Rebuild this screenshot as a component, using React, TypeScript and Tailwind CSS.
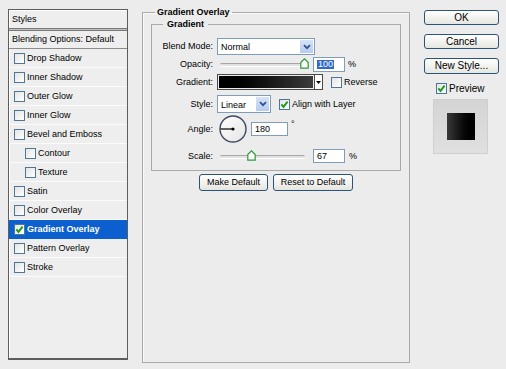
import React from "react";

const STYLES: { label: string; indent?: boolean; checked?: boolean; active?: boolean }[] = [
  { label: "Drop Shadow" },
  { label: "Inner Shadow" },
  { label: "Outer Glow" },
  { label: "Inner Glow" },
  { label: "Bevel and Emboss" },
  { label: "Contour", indent: true },
  { label: "Texture", indent: true },
  { label: "Satin" },
  { label: "Color Overlay" },
  { label: "Gradient Overlay", checked: true, active: true },
  { label: "Pattern Overlay" },
  { label: "Stroke" },
];

function Check({ checked }: { checked?: boolean }) {
  return (
    <span className="flex h-[11px] w-[11px] shrink-0 items-center justify-center border border-[#4c7797] bg-gradient-to-br from-[#e4e4e4] to-white">
      {checked && (
        <svg width="9" height="9" viewBox="0 0 9 9">
          <path d="M1.4 4.4 L3.5 6.9 L7.6 1.6" fill="none" stroke="#1c9a1c" strokeWidth="1.9" />
        </svg>
      )}
    </span>
  );
}

function Chevron() {
  return (
    <span className="flex h-full w-[15px] shrink-0 items-center justify-center border border-white bg-gradient-to-b from-[#d6e3f8] to-[#b6cbee]">
      <svg width="8" height="6" viewBox="0 0 8 6">
        <path d="M1 1.2 L4 4.2 L7 1.2" fill="none" stroke="#33508a" strokeWidth="1.7" />
      </svg>
    </span>
  );
}

function Select({ value, width }: { value: string; width: string }) {
  return (
    <div className={`flex h-full items-center border border-[#7f9db9] bg-white ${width}`}>
      <span className="flex-1 pl-[3px] pt-[2px]">{value}</span>
      <Chevron />
    </div>
  );
}

function Slider({ thumb }: { thumb: number }) {
  return (
    <div className="relative flex h-full w-[92px] items-center">
      <div className="mx-[3px] h-[3px] w-[85px] rounded-full border-t border-[#a7a7a7] bg-[#e2e2e2] shadow-[0_1px_0_#ffffff]" />
      <svg
        className="absolute top-[1px]"
        style={{ left: thumb }}
        width="9"
        height="11"
        viewBox="0 0 9 11"
      >
        <path d="M0.8 4.5 L4.5 0.8 L8.2 4.5 V10.2 H0.8 Z" fill="#fafafa" stroke="#2d9a3c" strokeWidth="1.2" />
      </svg>
    </div>
  );
}

function NumBox({ children, width }: { children: React.ReactNode; width: string }) {
  return (
    <div className={`flex h-full items-center border border-[#7f9db9] bg-white pl-[3px] ${width}`}>
      {children}
    </div>
  );
}

function Btn({ children, className = "" }: { children: React.ReactNode; className?: string }) {
  return (
    <div
      className={`flex items-center justify-center rounded-[3px] border border-[#2c5479] bg-gradient-to-b from-white to-[#e6e6e0] text-black ${className}`}
    >
      {children}
    </div>
  );
}

function Label({ children }: { children: React.ReactNode }) {
  return <span className="w-[61px] shrink-0 text-right">{children}</span>;
}

export default function App() {
  return (
    <div className="flex h-[369px] w-[506px] items-start bg-[#ececec] pl-[8px] font-['Liberation_Sans',Arial,sans-serif] text-[9px] leading-none text-black">
      {/* Styles list */}
      <div className="mt-[9px] flex h-[351px] w-[120px] flex-col border border-b-2 border-[#5d5d5d] bg-[#eeeeee] shadow-[inset_1px_1px_0_#ffffff]">
        <div className="flex h-[18px] shrink-0 items-center pl-[3px]">Styles</div>
        <div className="h-[3px] shrink-0 border-y border-[#7a7a7a] bg-[#bdbdbd]" />
        <div className="flex h-[18px] shrink-0 items-center border-b border-[#8c8c8c] pl-[3px]">
          Blending Options: Default
        </div>
        {STYLES.map((s) => (
          <div
            key={s.label}
            className={`flex h-[19px] shrink-0 items-center gap-[2px] border-b ${
              s.indent ? "pl-[16px]" : "pl-[5px]"
            } ${s.active ? "border-[#0b5fcf] bg-[#0b5fcf] font-bold text-white" : "border-[#fbfbfb]"}`}
          >
            <Check checked={s.checked} />
            <span>{s.label}</span>
          </div>
        ))}
      </div>

      {/* Settings */}
      <fieldset className="ml-[14px] mt-[6px] h-[357px] w-[268px] border border-[#a9a9a9] px-[8px] shadow-[inset_1px_1px_0_#fafafa]">
        <legend className="ml-[4px] px-[2px] font-bold leading-[12px]">Gradient Overlay</legend>
        <fieldset className="h-[153px] border border-[#a9a9a9]">
          <legend className="ml-[11px] px-[4px] font-bold leading-[12px]">Gradient</legend>
          <div className="flex flex-col">
            <div className="mt-[8px] flex h-[17px] items-center gap-[4px]">
              <Label>Blend Mode:</Label>
              <Select value="Normal" width="w-[98px]" />
            </div>
            <div className="mt-[2px] flex h-[15px] items-center gap-[4px]">
              <Label>Opacity:</Label>
              <Slider thumb={83} />
              <NumBox width="w-[32px]">
                <span className="bg-[#316ac5] px-[1px] text-white">100</span>
              </NumBox>
              <span className="-ml-[1px]">%</span>
            </div>
            <div className="mt-[2px] flex h-[16px] items-center">
              <Label>Gradient:</Label>
              <div className="ml-[4px] flex h-full w-[98px] border border-[#4a4a4a] p-[1px]">
                <div className="flex-1 bg-gradient-to-r from-black via-[#141414] to-[#3c3c3c]" />
              </div>
              <div className="flex h-full w-[8px] items-center justify-center border border-l-0 border-[#4a4a4a] bg-white">
                <svg width="5" height="3" viewBox="0 0 5 3">
                  <path d="M0 0 H5 L2.5 3 Z" fill="#000" />
                </svg>
              </div>
              <span className="ml-[8px]">
                <Check />
              </span>
              <span className="ml-[2px]">Reverse</span>
            </div>
            <div className="mt-[5px] flex h-[18px] items-center">
              <Label>Style:</Label>
              <span className="ml-[4px] h-full">
                <Select value="Linear" width="w-[54px]" />
              </span>
              <span className="ml-[8px]">
                <Check checked />
              </span>
              <span className="ml-[2px]">Align with Layer</span>
            </div>
            <div className="mt-[2px] flex h-[28px] items-center">
              <Label>Angle:</Label>
              <svg className="ml-[6px]" width="28" height="28" viewBox="0 0 28 28">
                <defs>
                  <linearGradient id="dial" x1="0" y1="0" x2="1" y2="1">
                    <stop offset="0" stopColor="#ffffff" />
                    <stop offset="1" stopColor="#e4e4e4" />
                  </linearGradient>
                </defs>
                <circle cx="14" cy="14" r="13" fill="url(#dial)" stroke="#3f4b66" strokeWidth="1.4" />
                <line x1="14" y1="14" x2="1.5" y2="14" stroke="#000" strokeWidth="1.2" />
                <circle cx="14" cy="14" r="1.6" fill="#000" />
              </svg>
              <span className="ml-[4px] h-[14px]">
                <NumBox width="w-[37px]">180</NumBox>
              </span>
              <span className="ml-[3px] -mt-[9px]">°</span>
            </div>
            <div className="mt-[6px] flex h-[14px] items-center gap-[4px]">
              <Label>Scale:</Label>
              <Slider thumb={30} />
              <NumBox width="w-[32px]">67</NumBox>
              <span>%</span>
            </div>
          </div>
        </fieldset>
        <div className="mt-[3px] flex justify-center gap-[5px]">
          <Btn className="h-[17px] w-[69px]">Make Default</Btn>
          <Btn className="h-[17px] w-[80px]">Reset to Default</Btn>
        </div>
      </fieldset>

      {/* Buttons and preview */}
      <div className="ml-[14px] mt-[10px] flex w-[75px] flex-col text-[10px]">
        <Btn className="h-[15px]">OK</Btn>
        <Btn className="mt-[9px] h-[15px]">Cancel</Btn>
        <Btn className="mt-[9px] h-[16px]">New Style...</Btn>
        <div className="mt-[9px] flex items-center gap-[2px] pl-[12px]">
          <Check checked />
          <span>Preview</span>
        </div>
        <div className="ml-[9px] mt-[5px] flex h-[55px] w-[55px] items-center justify-center border border-[#cfcfcf] bg-gradient-to-b from-[#d4d4d4] to-[#e0e0e0]">
          <div className="h-[27px] w-[28px] bg-gradient-to-r from-[#3a3a3a] to-black" />
        </div>
      </div>
    </div>
  );
}
